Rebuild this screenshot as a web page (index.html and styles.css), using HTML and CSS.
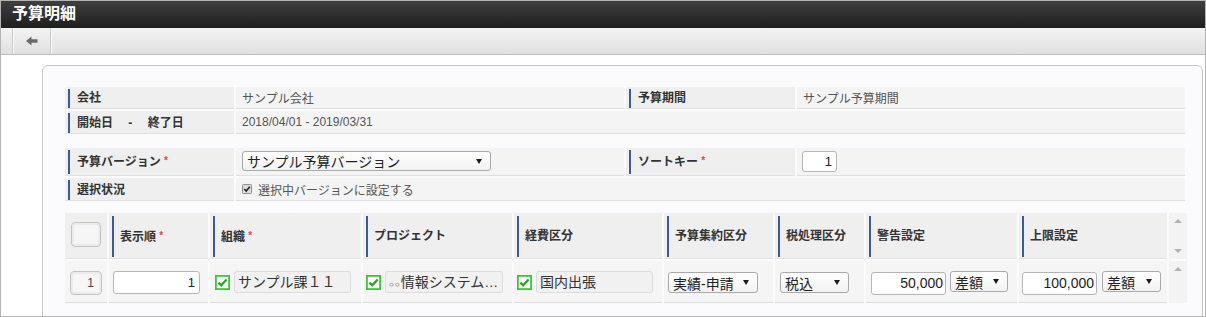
FILE: index.html
```html
<!DOCTYPE html>
<html lang="ja">
<head>
    <meta charset="UTF-8">
    <title>予算明細</title>
    <link rel="stylesheet" href="styles.css">
</head>
<body>
    <div class="frame">
        <div class="titlebar">予算明細</div>
        <div class="toolbar">
            <span class="tool-gap"></span>
            <span class="tool-btn">
                <svg width="12" height="10" viewBox="0 0 12 10"><path d="M0 5 L5.5 0.5 V3.3 H11.5 V6.7 H5.5 V9.5 Z" fill="#6a6a6a"/></svg>
            </span>
        </div>

        <div class="content">
            <div class="card">
                <!-- basic info -->
                <table class="form-table">
                    <colgroup>
                        <col class="c-label"><col class="c-value"><col class="c-label"><col class="c-value">
                    </colgroup>
                    <tr class="r-first">
                        <th><div class="lbl">会社</div></th>
                        <td>サンプル会社</td>
                        <th><div class="lbl">予算期間</div></th>
                        <td>サンプル予算期間</td>
                    </tr>
                    <tr class="r-second">
                        <th><div class="lbl">開始日　 -　 終了日</div></th>
                        <td colspan="3">2018/04/01 - 2019/03/31</td>
                    </tr>
                </table>

                <!-- version -->
                <table class="form-table version">
                    <colgroup>
                        <col class="c-label"><col class="c-value"><col class="c-label"><col class="c-value">
                    </colgroup>
                    <tr class="r-tall">
                        <th><div class="lbl">予算バージョン <span class="req">*</span></div></th>
                        <td><div class="select wide">サンプル予算バージョン<span class="caret"></span></div></td>
                        <th><div class="lbl">ソートキー <span class="req">*</span></div></th>
                        <td class="sort-cell"><div class="num-input sort">1</div></td>
                    </tr>
                    <tr class="r-second">
                        <th><div class="lbl">選択状況</div></th>
                        <td colspan="3">
                            <span class="check-line">
                                <svg width="10" height="10" viewBox="0 0 10 10"><rect x="0.5" y="0.5" width="9" height="9" rx="1" fill="#dcdcdc" stroke="#8f8f8f"/><path d="M2.2 5 L4.2 7 L7.8 2.8" fill="none" stroke="#222" stroke-width="1.6"/></svg>
                                選択中バージョンに設定する
                            </span>
                        </td>
                    </tr>
                </table>

                <!-- detail grid -->
                <table class="grid">
                    <colgroup>
                        <col class="g-sel"><col class="g-order"><col class="g-org"><col class="g-proj"><col class="g-cost">
                        <col class="g-sum"><col class="g-tax"><col class="g-warn"><col class="g-limit"><col class="g-scroll">
                    </colgroup>
                    <tr class="g-head">
                        <th><div class="row-box head"></div></th>
                        <th><div class="lbl">表示順 <span class="req">*</span></div></th>
                        <th><div class="lbl">組織 <span class="req">*</span></div></th>
                        <th><div class="lbl">プロジェクト</div></th>
                        <th><div class="lbl">経費区分</div></th>
                        <th><div class="lbl">予算集約区分</div></th>
                        <th><div class="lbl">税処理区分</div></th>
                        <th><div class="lbl">警告設定</div></th>
                        <th><div class="lbl">上限設定</div></th>
                        <th class="scroll"><span class="tri up"></span><span class="tri down"></span></th>
                    </tr>
                    <tr class="g-row">
                        <td class="pad-sel"><div class="row-box">1</div></td>
                        <td class="pad-order"><div class="num-input order">1</div></td>
                        <td class="pad-org">
                            <div class="pick">
                                <svg class="gcheck" width="15" height="15" viewBox="0 0 15 15"><rect x="0.9" y="0.9" width="13.2" height="13.2" fill="#fff" stroke="#3cc43c" stroke-width="1.8"/><path d="M3.4 7.6 L6.2 10.3 L11.6 4.4" fill="none" stroke="#2aa52a" stroke-width="2.2"/></svg>
                                <div class="ro-box org">サンプル課１１</div>
                            </div>
                        </td>
                        <td class="pad-proj">
                            <div class="pick">
                                <svg class="gcheck" width="15" height="15" viewBox="0 0 15 15"><rect x="0.9" y="0.9" width="13.2" height="13.2" fill="#fff" stroke="#3cc43c" stroke-width="1.8"/><path d="M3.4 7.6 L6.2 10.3 L11.6 4.4" fill="none" stroke="#2aa52a" stroke-width="2.2"/></svg>
                                <div class="ro-box proj"><span class="mark">○○</span>情報システム…</div>
                            </div>
                        </td>
                        <td class="pad-cost">
                            <div class="pick">
                                <svg class="gcheck" width="15" height="15" viewBox="0 0 15 15"><rect x="0.9" y="0.9" width="13.2" height="13.2" fill="#fff" stroke="#3cc43c" stroke-width="1.8"/><path d="M3.4 7.6 L6.2 10.3 L11.6 4.4" fill="none" stroke="#2aa52a" stroke-width="2.2"/></svg>
                                <div class="ro-box cost">国内出張</div>
                            </div>
                        </td>
                        <td class="pad-sum"><div class="select sum">実績-申請<span class="caret"></span></div></td>
                        <td class="pad-tax"><div class="select tax">税込<span class="caret"></span></div></td>
                        <td class="pad-warn">
                            <div class="pair">
                                <div class="num-input amount">50,000</div>
                                <div class="select diff">差額<span class="caret"></span></div>
                            </div>
                        </td>
                        <td class="pad-limit">
                            <div class="pair wide-gap">
                                <div class="num-input amount">100,000</div>
                                <div class="select diff">差額<span class="caret"></span></div>
                            </div>
                        </td>
                        <td class="scroll"><span class="tri up"></span></td>
                    </tr>
                </table>
            </div>
        </div>
    </div>
</body>
</html>
```

FILE: styles.css
```css
* {
    box-sizing: border-box;
}
body {
    margin: 0;
    font-family: "Liberation Sans", "Noto Sans CJK JP", sans-serif;
    font-size: 12px;
    color: #333;
    background-color: #fff;
}
.frame {
    width: 1206px;
    height: 317px;
    border: 1px solid #b4b4b4;
    overflow: hidden;
}
.titlebar {
    height: 27px;
    line-height: 26px;
    padding-left: 11px;
    background: linear-gradient(#3f3f3f, #1f1f1f);
    color: #fff;
    font-size: 16px;
    font-weight: bold;
}
.toolbar {
    display: flex;
    height: 27px;
    background: linear-gradient(#f3f3f3, #e0e0e0);
    border-bottom: 1px solid #bdbdbd;
}
.tool-gap {
    width: 12px;
    border-right: 1px solid #c8c8c8;
    box-shadow: 1px 0 #fafafa;
}
.tool-btn {
    width: 38px;
    display: flex;
    align-items: center;
    justify-content: center;
    border-right: 1px solid #c8c8c8;
    box-shadow: 1px 0 #fafafa;
}
.content {
    padding: 10px 2px 0 41px;
}
.card {
    height: 300px;
    padding: 19px 0 0 20px;
    background-color: #fbfbfd;
    border: 1px solid #c6c6c6;
    border-radius: 6px;
}

/* form tables */
.form-table {
    border-collapse: separate;
    border-spacing: 2px;
    table-layout: fixed;
    width: 1124px;
}
.form-table col.c-label {
    width: 169px;
}
.form-table col.c-value {
    width: 388px;
}
.form-table th {
    padding: 2px 0 0 3px;
    background-color: #efefef;
    border-bottom: 1px solid #e0e0e0;
    text-align: left;
    vertical-align: top;
}
.form-table td {
    padding: 0 0 0 6px;
    background-color: #f4f4f4;
    border-bottom: 1px solid #e0e0e0;
    color: #555;
    font-size: 12px;
    vertical-align: middle;
}
.lbl {
    border-left: 2px solid #3b5a9a;
    padding-left: 7px;
    font-weight: bold;
    font-size: 12px;
    color: #333;
    white-space: nowrap;
}
.r-first th .lbl {
    height: 19px;
    line-height: 19px;
}
.r-first td {
    height: 22px;
}
.r-second th .lbl {
    height: 20px;
    line-height: 20px;
}
.r-second td {
    height: 23px;
}
.form-table.version {
    margin-top: 10px;
}
.r-tall th .lbl {
    height: 24px;
    line-height: 21px;
}
.r-tall td {
    height: 28px;
    vertical-align: top;
    padding-top: 3px;
}
.r-tall td.sort-cell {
    padding-left: 5px;
}
.req {
    color: #e04848;
    font-size: 10px;
    vertical-align: 2px;
}
.check-line {
    display: inline-flex;
    align-items: center;
    gap: 6px;
    color: #555;
}

/* inputs */
.select {
    display: flex;
    align-items: center;
    justify-content: space-between;
    height: 21px;
    padding: 0 8px 0 4px;
    background: linear-gradient(#fff, #f2f2f2);
    border: 1px solid #a9a9a9;
    border-radius: 3px;
    font-size: 14px;
    color: #222;
    white-space: nowrap;
}
.select.wide {
    width: 249px;
    height: 20px;
    font-size: 14px;
}
.caret {
    width: 0;
    height: 0;
    border-left: 3.5px solid transparent;
    border-right: 3.5px solid transparent;
    border-top: 5px solid #1a1a1a;
}
.num-input {
    height: 23px;
    line-height: 21px;
    padding-right: 4px;
    background-color: #fff;
    border: 1px solid #b5b5b5;
    border-radius: 3px;
    text-align: right;
    font-size: 13px;
    color: #222;
}
.num-input.sort {
    width: 35px;
    height: 21px;
    line-height: 19px;
    font-size: 13px;
}

/* grid */
.grid {
    margin-top: 8px;
    border-collapse: separate;
    border-spacing: 2px;
    table-layout: fixed;
    width: 1126px;
}
.g-sel { width: 42px; }
.g-order { width: 99px; }
.g-org { width: 151px; }
.g-proj { width: 149px; }
.g-cost { width: 148px; }
.g-sum { width: 109px; }
.g-tax { width: 89px; }
.g-warn { width: 151px; }
.g-limit { width: 148px; }
.g-scroll { width: 18px; }

.g-head th {
    height: 46px;
    padding: 3px 0 1px 3px;
    background-color: #efefef;
    border-bottom: 1px solid #e3e3e3;
    text-align: left;
    vertical-align: top;
}
.g-head th .lbl {
    height: 41px;
    line-height: 40px;
    padding-left: 6px;
}
.g-head th:first-child {
    padding: 9px 0 0 6px;
}
.row-box {
    width: 32px;
    height: 24px;
    line-height: 22px;
    padding-right: 7px;
    background-color: #f6f6f6;
    border: 1px solid #c4c4c4;
    border-radius: 4px;
    box-shadow: inset 0 0 0 2px #ebebeb;
    text-align: right;
    font-size: 12px;
    color: #444;
}
.row-box.head {
    width: 30px;
    height: 25px;
}
.g-row td {
    height: 42px;
    padding-top: 10px;
    background-color: #f5f5f5;
    border-bottom: 1px solid #dcdcdc;
    vertical-align: top;
}
.g-row td.pad-sel { padding-left: 5px; }
.g-row td.pad-order { padding-left: 4px; }
.g-row td.pad-org { padding-left: 5px; }
.g-row td.pad-proj { padding-left: 3px; }
.g-row td.pad-cost { padding-left: 3px; }
.g-row td.pad-sum { padding-left: 4px; padding-top: 11px; }
.g-row td.pad-tax { padding-left: 5px; padding-top: 11px; }
.g-row td.pad-warn { padding-left: 5px; }
.g-row td.pad-limit { padding-left: 3px; }

.num-input.order {
    width: 87px;
    height: 23px;
}
.pick {
    display: flex;
    align-items: center;
    gap: 4px;
}
.ro-box {
    height: 22px;
    line-height: 20px;
    padding-left: 3px;
    background-color: #f1f1f1;
    border: 1px solid #dcdcdc;
    border-radius: 3px;
    font-size: 14px;
    color: #333;
    white-space: nowrap;
    overflow: hidden;
}
.ro-box.org { width: 117px; }
.ro-box.proj { width: 118px; }
.ro-box.cost { width: 117px; }
.mark {
    font-size: 8px;
    letter-spacing: 1px;
}
.select.sum { width: 90px; height: 21px; }
.select.tax { width: 69px; height: 21px; }
.pair {
    display: flex;
    align-items: flex-start;
    gap: 4px;
}
.pair.wide-gap {
    gap: 5px;
}
.num-input.amount {
    width: 75px;
    height: 23px;
    margin-top: 1px;
    font-size: 14px;
    padding-right: 2px;
}
.select.diff {
    width: 58px;
    height: 21px;
}
.wide-gap .select.diff {
    width: 59px;
}

/* scroll column */
.grid .scroll {
    padding: 6px 0 0 0;
    background-color: #f3f3f3;
    border-bottom: none;
    text-align: center;
}
.g-head th.scroll {
    display: table-cell;
}
.tri {
    display: block;
    width: 0;
    height: 0;
    margin: 0 auto;
    border-left: 4px solid transparent;
    border-right: 4px solid transparent;
}
.tri.up {
    border-bottom: 4px solid #b3b3b3;
}
.tri.down {
    margin-top: 26px;
    border-top: 4px solid #b3b3b3;
}
```
